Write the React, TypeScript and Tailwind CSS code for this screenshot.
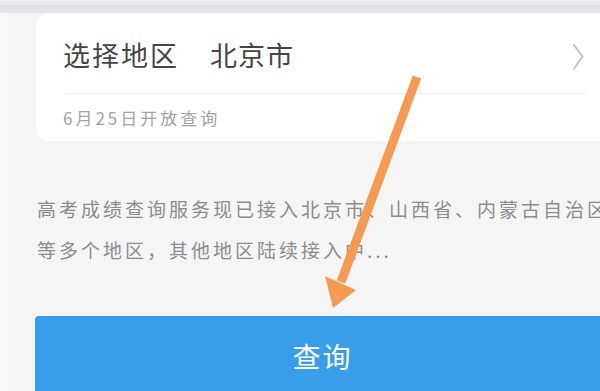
import React from 'react';

const cjk = '"Noto Sans CJK SC", "Noto Sans", sans-serif';

const ScoreQueryScreen: React.FC = () => {
  return (
    <div
      className="relative w-[600px] h-[391px] overflow-hidden bg-[#f5f5f5]"
      style={{ fontFamily: cjk }}
    >
      {/* blurred top strip */}
      <div className="h-[13px] bg-gradient-to-b from-[#f2f3f6] via-[#dfe1e8] to-[#e6e7ec]" />

      <div className="flex">
        <div className="w-[8px] shrink-0 bg-[#fafafa]" />
        <div className="w-[637px] shrink-0 pl-[27px] pr-[35px]">
          {/* region card */}
          <div className="mt-[1px] ml-[1px] rounded-[12px] bg-white">
            <div className="flex h-[79px] items-center pl-[27px] pr-[26px] pt-[3px]">
              <span className="text-[27px] tracking-[2px] text-[#454545]">选择地区</span>
              <span className="ml-[31px] text-[27px] tracking-[1px] text-[#454545]">北京市</span>
              <svg className="ml-auto mt-[3px] h-[28px] w-[12px]" viewBox="0 0 12 28" fill="none">
                <path d="M1.5 1.5 L10.5 13.5 L1.5 26.5" stroke="#bdbdbd" strokeWidth="1.8" />
              </svg>
            </div>
            <div className="ml-[29px] mr-[25px] h-px bg-[#ececec]" />
            <div className="flex h-[47px] items-center pl-[27px]">
              <span className="text-[17px] tracking-[3px] text-[#a3a3a3]">6月25日开放查询</span>
            </div>
          </div>

          {/* notice */}
          <div className="mt-[47px] pl-[2px] text-[19px] leading-[41px] tracking-[3px] text-[#8c8c8c] whitespace-nowrap">
            <p>高考成绩查询服务现已接入北京市、山西省、内蒙古自治区</p>
            <p>等多个地区，其他地区陆续接入中...</p>
          </div>

          {/* query button */}
          <button className="mt-[46px] flex h-[80px] w-full items-center justify-center rounded-t-[4px] bg-[#389eea] text-[28px] tracking-[2px] text-white">
            查询
          </button>
        </div>
      </div>

      {/* annotation arrow */}
      <svg className="pointer-events-none absolute inset-0" width="600" height="391" viewBox="0 0 600 391">
        <line x1="417" y1="77" x2="341" y2="282" stroke="#f49a52" strokeWidth="9" strokeLinecap="butt" />
        <polygon points="325,276 356,290 333,308" fill="#f49a52" />
      </svg>
    </div>
  );
};

export default function App() {
  return <ScoreQueryScreen />;
}
